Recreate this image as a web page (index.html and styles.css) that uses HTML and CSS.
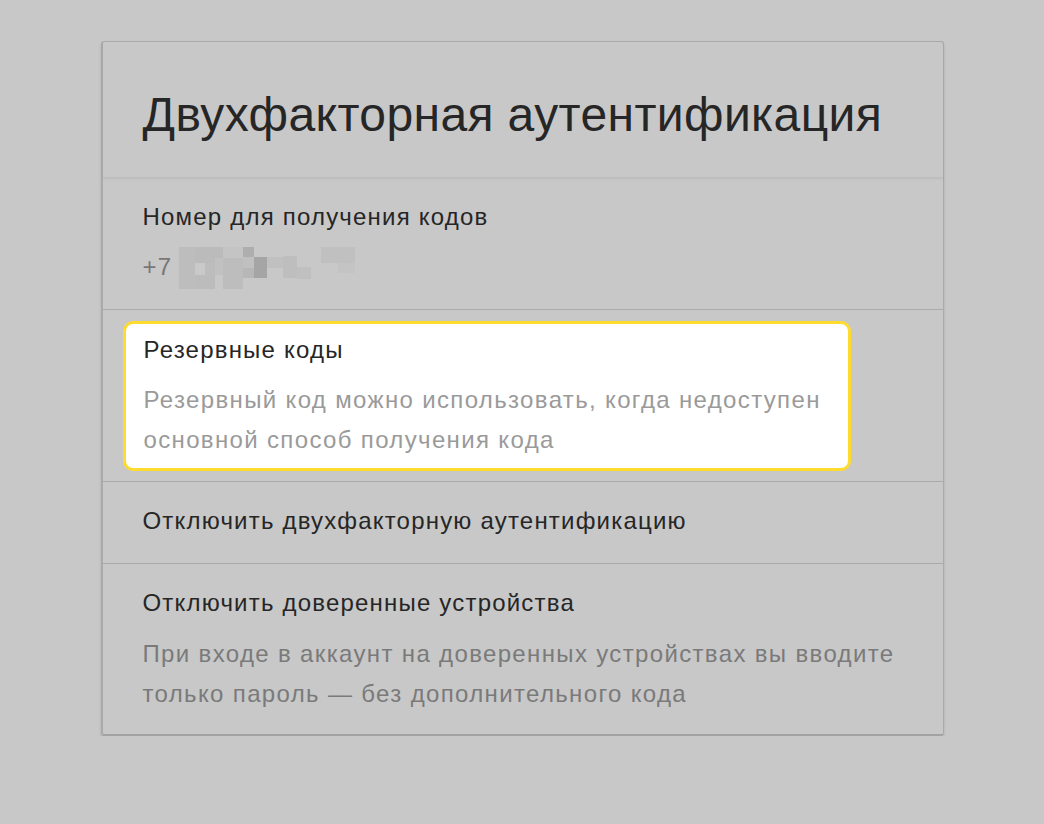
FILE: index.html
```html
<!DOCTYPE html>
<html lang="ru">
<head>
    <meta charset="UTF-8">
    <meta name="viewport" content="width=device-width, initial-scale=1.0">
    <title>Двухфакторная аутентификация</title>
    <link rel="stylesheet" href="styles.css">
</head>
<body>

    <div class="card">
        <div class="card-header">
            <h1>Двухфакторная аутентификация</h1>
        </div>

        <div class="row">
            <div class="row-title">Номер для получения кодов</div>
            <div class="phone">
                <span>+7</span>
                <svg class="mosaic" width="180" height="44" viewBox="179 247 180 44">
                    <rect x="179" y="247" width="16" height="42" fill="#bdbdbd"/>
                    <rect x="195" y="247" width="28" height="16" fill="#bbbbbb"/>
                    <rect x="195" y="263" width="10" height="12" fill="#c9c9c9"/>
                    <rect x="205" y="263" width="10" height="12" fill="#bdbdbd"/>
                    <rect x="195" y="275" width="20" height="14" fill="#bcbcbc"/>
                    <rect x="215" y="258" width="8" height="17" fill="#c1c1c1"/>
                    <rect x="223" y="247" width="20" height="11" fill="#c4c4c4"/>
                    <rect x="223" y="258" width="20" height="31" fill="#bdbdbd"/>
                    <rect x="243" y="247" width="11" height="10" fill="#aeaeae"/>
                    <rect x="243" y="257" width="11" height="11" fill="#c0c0c0"/>
                    <rect x="243" y="268" width="11" height="10" fill="#b7b7b7"/>
                    <rect x="254" y="257" width="13" height="21" fill="#a5a5a5"/>
                    <rect x="267" y="257" width="16" height="11" fill="#c0c0c0"/>
                    <rect x="283" y="256" width="14" height="22" fill="#bebebe"/>
                    <rect x="297" y="267" width="14" height="12" fill="#c0c0c0"/>
                    <rect x="321" y="247" width="34" height="16" fill="#c0c0c0"/>
                    <rect x="338" y="263" width="17" height="10" fill="#c4c4c4"/>
                </svg>
            </div>
        </div>

        <div class="row row-active">
            <div class="highlight">
                <div class="row-title">Резервные коды</div>
                <p class="row-desc">Резервный код можно использовать, когда недоступен<br>основной способ получения кода</p>
            </div>
        </div>

        <div class="row row-single">
            <div class="row-title">Отключить двухфакторную аутентификацию</div>
        </div>

        <div class="row row-last">
            <div class="row-title">Отключить доверенные устройства</div>
            <p class="row-desc">При входе в аккаунт на доверенных устройствах вы вводите<br>только пароль — без дополнительного кода</p>
        </div>
    </div>

</body>
</html>
```

FILE: styles.css
```css
body {
    font-family: "Liberation Sans", Arial, sans-serif;
    background-color: #c8c8c8;
    color: #262626;
    margin: 0;
    padding: 41px 0 0;
}

.card {
    width: 840px;
    margin: 0 auto;
    border: 1px solid #aaaaaa;
    border-left-width: 2px;
    border-bottom: 2px solid #a2a2a2;
    border-radius: 3px;
    box-shadow: 0 2px 3px rgba(0, 0, 0, 0.12);
}

.card-header {
    height: 125px;
    padding: 10px 40px 0;
    display: flex;
    align-items: center;
    border-bottom: 1px solid #bcbcbc;
    box-shadow: 0 1px 2px rgba(0, 0, 0, 0.06);
}

.card-header h1 {
    margin: 0;
    font-size: 48px;
    font-weight: normal;
    letter-spacing: 0.4px;
    color: #262626;
    line-height: 1;
}

.row {
    padding: 24px 40px 22px;
    border-bottom: 1px solid #aaaaaa;
}

.row-single {
    padding-bottom: 27px;
}

.row-last {
    border-bottom: none;
    padding-bottom: 20px;
}

.row-title {
    font-size: 24px;
    line-height: 30px;
    letter-spacing: 1.2px;
    color: #262626;
}

.phone {
    margin-top: 15px;
    height: 40px;
    display: flex;
    align-items: center;
    font-size: 24px;
    letter-spacing: 1.2px;
    color: #777;
}

.mosaic {
    display: block;
    margin-left: 7px;
    margin-top: 4px;
}

.row-desc {
    margin: 16px 0 0;
    font-size: 24px;
    line-height: 40px;
    letter-spacing: 1.35px;
    color: #7a7a7a;
}

.row-active {
    padding: 11px 92px 10px 20px;
}

.highlight {
    background-color: #fff;
    border: 3px solid #ffdb2e;
    border-radius: 10px;
    padding: 11px 18px 8px;
}

.highlight .row-desc {
    margin-top: 15px;
    color: #9a9a9a;
}
```
